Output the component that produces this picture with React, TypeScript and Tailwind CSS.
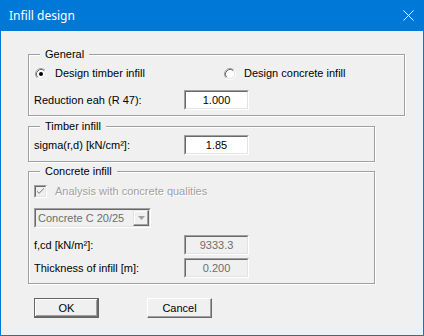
import React from 'react';

const font = { fontFamily: '"Liberation Sans", Arial, sans-serif' };

function Radio({ checked }: { checked?: boolean }) {
  return (
    <svg width="12" height="12" viewBox="0 0 12 12" className="shrink-0">
      <circle cx="6" cy="6" r="4.5" fill="#fff" />
      <path d="M9.89 2.11A5.5 5.5 0 0 0 2.11 9.89" fill="none" stroke="#a0a0a0" />
      <path d="M9.89 2.11A5.5 5.5 0 0 1 2.11 9.89" fill="none" stroke="#fff" />
      <path d="M9.18 2.82A4.5 4.5 0 0 0 2.82 9.18" fill="none" stroke="#696969" />
      <path d="M9.18 2.82A4.5 4.5 0 0 1 2.82 9.18" fill="none" stroke="#e3e3e3" />
      {checked && <circle cx="6" cy="6" r="2" fill="#000" />}
    </svg>
  );
}

function Field({ value, disabled }: { value: string; disabled?: boolean }) {
  return (
    <div className="w-[65px] h-[20px] border border-t-[#a0a0a0] border-l-[#a0a0a0] border-r-white border-b-white">
      <div
        className={`h-full border border-t-[#696969] border-l-[#696969] border-r-[#e3e3e3] border-b-[#e3e3e3] flex items-center justify-center text-[11px] ${
          disabled ? 'bg-[#f0f0f0] text-[#6d6d6d]' : 'bg-white text-black'
        }`}
      >
        {value}
      </div>
    </div>
  );
}

function Group({ title, className = '', children }: { title: string; className?: string; children: React.ReactNode }) {
  return (
    <fieldset
      className={`border border-[#a0a0a0] shadow-[1px_1px_0_#fff,inset_1px_1px_0_#fff] pl-[5px] ${className}`}
    >
      <legend className="ml-[6px] px-[5px] text-[11px] leading-[13px] bg-[#f0f0f0]">{title}</legend>
      {children}
    </fieldset>
  );
}

export default function App() {
  return (
    <div className="w-[424px] h-[336px] bg-[#f0f0f0] border-x border-b border-[#0078d7] flex flex-col text-black" style={font}>
      <div className="h-[31px] bg-[#0078d7] flex items-center justify-between pl-[8px] pr-[9px] shrink-0">
        <span className="text-white text-[12px]" style={{ fontFamily: '"Noto Sans", sans-serif' }}>
          Infill design
        </span>
        <svg width="11" height="11" viewBox="0 0 11 11">
          <path d="M0.5 0.5L10.5 10.5M10.5 0.5L0.5 10.5" stroke="#fff" strokeWidth="1" />
        </svg>
      </div>

      <div className="pl-[27px] pt-[17px] flex flex-col">
        <Group title="General" className="w-[377px] pt-[6px] pb-[5px]">
          <div className="flex items-center h-[13px] text-[11px]">
            <div className="w-[190px] flex items-center pl-px gap-[8px]">
              <Radio checked />
              <span>Design timber infill</span>
            </div>
            <div className="flex items-center gap-[8px]">
              <Radio />
              <span>Design concrete infill</span>
            </div>
          </div>
          <div className="flex items-center mt-[10px] text-[11px]">
            <span className="w-[150px]">Reduction eah (R 47):</span>
            <Field value="1.000" />
          </div>
        </Group>

        <Group title="Timber infill" className="w-[347px] mt-[4px] pt-[2px] pb-[6px]">
          <div className="flex items-center text-[11px]">
            <span className="w-[150px]">sigma(r,d) [kN/cm²]:</span>
            <Field value="1.85" />
          </div>
        </Group>

        <Group title="Concrete infill" className="w-[347px] mt-[3px] pt-[7px] pb-[5px]">
          <div className="flex items-center h-[13px] text-[11px] gap-[8px]">
            <div className="w-[13px] h-[13px] border border-t-[#a0a0a0] border-l-[#a0a0a0] border-r-white border-b-white">
              <div className="w-full h-full border border-t-[#696969] border-l-[#696969] border-r-[#e3e3e3] border-b-[#e3e3e3] bg-[#f0f0f0] flex items-center justify-center">
                <svg width="7" height="7" viewBox="0 0 7 7">
                  <path d="M0 2v2l2 2l5-5v-1l-5 5z" fill="#a0a0a0" />
                  <path d="M0 3l2 2l5-5" fill="none" stroke="#a0a0a0" />
                </svg>
              </div>
            </div>
            <span className="text-[#a0a0a0] [text-shadow:1px_1px_0_#fff]">Analysis with concrete qualities</span>
          </div>

          <div className="mt-[10px] w-[117px] h-[20px] border border-t-[#a0a0a0] border-l-[#a0a0a0] border-r-white border-b-white">
            <div className="h-full border border-t-[#696969] border-l-[#696969] border-r-[#e3e3e3] border-b-[#e3e3e3] flex items-center justify-between text-[11px] text-[#6d6d6d] pl-[2px]">
              <span>Concrete C 20/25</span>
              <div className="w-[16px] h-full border border-t-[#e3e3e3] border-l-[#e3e3e3] border-r-[#696969] border-b-[#696969] shadow-[inset_-1px_-1px_0_#a0a0a0,inset_1px_1px_0_#fff] flex items-center justify-center">
                <svg width="7" height="4" viewBox="0 0 7 4">
                  <path d="M0 0h7l-3.5 4z" fill="#a0a0a0" />
                </svg>
              </div>
            </div>
          </div>

          <div className="flex items-center mt-[7px] text-[11px]">
            <span className="w-[150px]">f,cd [kN/m²]:</span>
            <Field value="9333.3" disabled />
          </div>
          <div className="flex items-center mt-[3px] text-[11px]">
            <span className="w-[150px]">Thickness of infill [m]:</span>
            <Field value="0.200" disabled />
          </div>
        </Group>

        <div className="flex mt-[14px] pl-[6px] gap-[48px] text-[11px]">
          <button className="w-[65px] h-[20px] border border-[#646464] shadow-[inset_-1px_-1px_0_#696969,inset_1px_1px_0_#fff,inset_-2px_-2px_0_#a0a0a0] bg-[#f0f0f0]">
            OK
          </button>
          <button className="w-[65px] h-[20px] border border-t-white border-l-white border-r-[#696969] border-b-[#696969] shadow-[inset_-1px_-1px_0_#a0a0a0] bg-[#f0f0f0]">
            Cancel
          </button>
        </div>
      </div>
    </div>
  );
}
